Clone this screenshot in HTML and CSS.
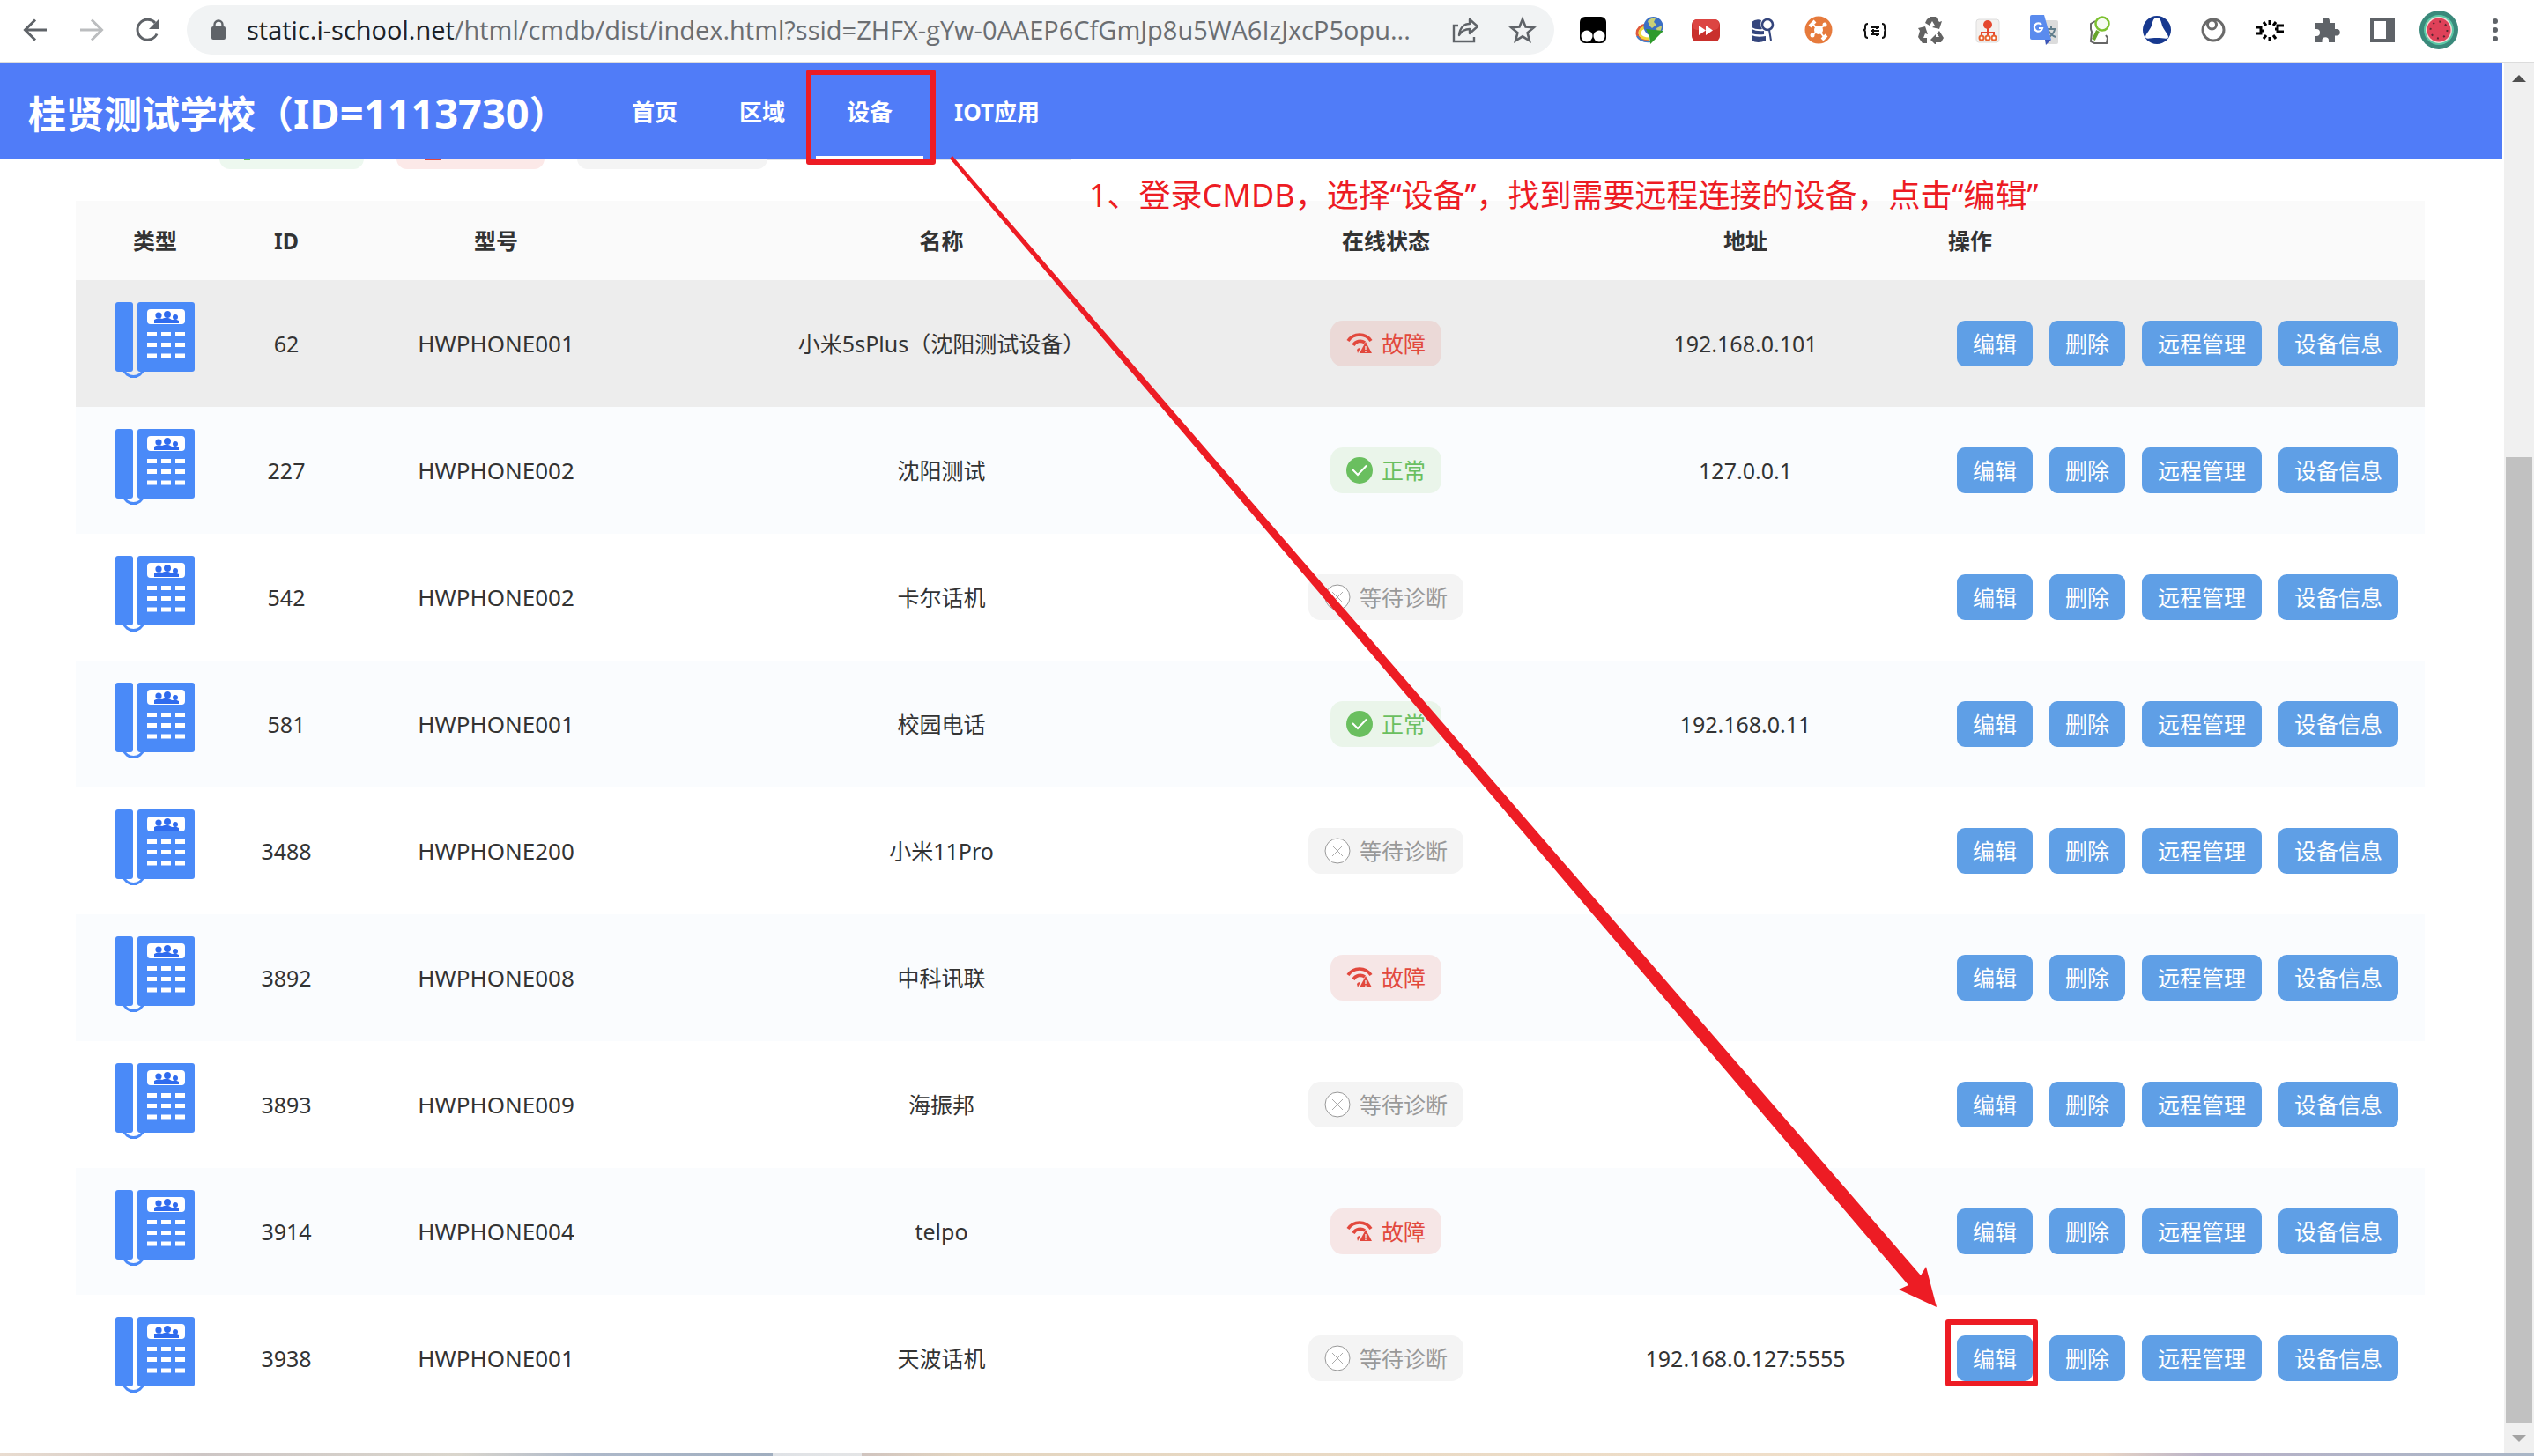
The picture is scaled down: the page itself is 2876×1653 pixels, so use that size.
FILE: index.html
```html
<!DOCTYPE html>
<html lang="zh-CN">
<head>
<meta charset="utf-8">
<title>CMDB 设备</title>
<link rel="stylesheet" href="styles.css">
</head>
<body>
<svg class="sprite" aria-hidden="true">
  <symbol id="phone" viewBox="0 0 90 94">
    <path d="M9 76a12 12 0 0 0 23 0" fill="none" stroke="#4a8af8" stroke-width="3"/>
    <rect width="20" height="79" rx="3" fill="#4a8af8"/>
    <rect x="25" width="65" height="79" rx="3" fill="#4a8af8"/>
    <rect x="36" y="8" width="43" height="17" rx="4" fill="#fff"/>
    <g fill="#2f6bee"><circle cx="49" cy="15" r="3.6"/><circle cx="59" cy="14" r="4"/><circle cx="68" cy="17" r="3"/><path d="M44 24v-4q5-3 9-1 6-3 11 1 5-1 8 1v3z"/></g>
    <path d="M36 36.500h11m5 0h11m5 0h11M36 48.500h11m5 0h11m5 0h11M36 61h11m5 0h11m5 0h11" stroke="#fff" stroke-width="5"/>
  </symbol>
  <symbol id="fault" viewBox="0 0 30 30">
    <path d="M2 12a15.500 15.500 0 0 1 26 0M8 17a9 9 0 0 1 13-3" fill="none" stroke="#e2483d" stroke-width="3.600"/>
    <path d="M22 13l7 13H15z" fill="#e2483d"/><path d="M22 18v4m0 1.500v1.500" stroke="#ecdcdc" stroke-width="1.500"/><path d="M12 22a4 4 0 0 1 4-2l-3 6z" fill="#e2483d"/>
  </symbol>
  <symbol id="ok" viewBox="0 0 30 30">
    <circle cx="15" cy="15" r="15" fill="#6abf5f"/><path d="M7 14l6 6L23 9.500" fill="none" stroke="#fff" stroke-width="2"/>
  </symbol>
  <symbol id="wait" viewBox="0 0 30 30">
    <circle cx="15" cy="15" r="14" fill="#fff" stroke="#999" stroke-width="1"/><path d="M9 9l12 12M21 9L9 21" stroke="#aaa" stroke-width="1"/>
  </symbol>
</svg>

<div class="toolbar">
  <button class="tool" aria-label="后退"><svg width="32" height="32" viewBox="0 0 32 32"><path d="M29 16H5M16 4.500L4.500 16 16 27.500" fill="none" stroke="#5f6368" stroke-width="3"/></svg></button>
  <button class="tool" aria-label="前进"><svg width="32" height="32" viewBox="0 0 32 32"><path d="M3 16h24M16 4.500L27.500 16 16 27.500" fill="none" stroke="#bbbdbf" stroke-width="3"/></svg></button>
  <button class="tool" aria-label="刷新"><svg width="32" height="32" viewBox="0 0 32 32"><path d="M26 20.500A11.500 11.500 0 1 1 24 8" fill="none" stroke="#5f6368" stroke-width="3"/><path d="M29 3v12H17z" fill="#5f6368"/></svg></button>
  <div class="address">
    <svg class="lock" width="18" height="24" viewBox="0 0 18 24"><path d="M4.500 10V6a4.500 4.500 0 0 1 9 0v4" fill="none" stroke="#5f6368" stroke-width="2.400"/><rect x="1" y="8" width="16" height="15" rx="2" fill="#5f6368"/></svg>
    <span class="url"><span class="host">static.i-school.net</span>/html/cmdb/dist/index.html?ssid=ZHFX-gYw-0AAEP6CfGmJp8u5WA6IzJxcP5opu...</span>
    <button class="tool" aria-label="分享"><svg width="32" height="32" viewBox="0 0 32 32"><path d="M7 11H2v18h23v-5" fill="none" stroke="#5f6368" stroke-width="2.400"/><path d="M8 22C9 13 14 9 20 9V4l9 8-9 8v-5c-5 0-9 2-12 7z" fill="none" stroke="#5f6368" stroke-width="2.400" stroke-linejoin="round"/></svg></button>
    <button class="tool" aria-label="收藏"><svg width="32" height="32" viewBox="0 0 32 32"><path d="M16 4l3.500 8.600 9.200.7-7.100 6 2.300 9-7.900-4.900-7.900 4.900 2.300-9-7.100-6 9.200-.7z" fill="none" stroke="#5f6368" stroke-width="2.600"/></svg></button>
  </div>
  <button class="tool" aria-label="扩展 1"><svg width="32" height="32" viewBox="0 0 32 32"><rect x="1" y="1" width="30" height="30" rx="6"/><circle cx="9" cy="23" r="6.500" fill="#fff"/><circle cx="23" cy="23" r="6.500" fill="#fff"/></svg></button>
  <button class="tool" aria-label="下载器"><svg width="32" height="32" viewBox="0 0 32 32"><path d="M12 10Q2 12 2 20q1 8 14 8" fill="none" stroke="#e05a3a" stroke-width="3"/><path d="M12 13Q5 14 5 20q1 6 11 6" fill="none" stroke="#f2d53c" stroke-width="3"/><path d="M2 23q4 7 15 6" fill="none" stroke="#3f7fd0" stroke-width="2"/><circle cx="20.500" cy="12" r="11" fill="#3b6fc4"/><path d="M14 6q5-5 9-3l-2 4 3 3-5 4-3-3zM24 14l6-3q0 7-5 9z" fill="#c9cf76"/><path d="M12 15l20 2-15 15-1-9z" fill="#2f9a2c"/></svg></button>
  <button class="tool" aria-label="视频加速"><svg width="32" height="32" viewBox="0 0 32 32"><rect y="4" width="32" height="25" rx="6" fill="#c9302c"/><rect x="1" y="4" width="30" height="12" rx="5" fill="#dc4542"/><path d="M8 11l8 5.500L8 22zM16 11l8 5.500-8 5.500z" fill="#fff"/></svg></button>
  <button class="tool" aria-label="数据查询"><svg width="32" height="32" viewBox="0 0 32 32"><path d="M4 7q5-4 11-2-2 6 1 10-7 1-12-2zM4 15q6 3 14 2v4q-8 1-14-1zM4 22q6 3 16 1v5q-9 4-16 0z" fill="#34457c"/><g fill="none" stroke="#34457c"><circle cx="22" cy="10" r="6" stroke-width="2.600"/><path d="M24 16l2 12" stroke-width="2"/></g></svg></button>
  <button class="tool" aria-label="图谱"><svg width="32" height="32" viewBox="0 0 32 32"><circle cx="16" cy="16" r="15.500" fill="#e67a3c"/><circle cx="16" cy="16" r="5" fill="#fff"/><path d="M16 16L9 9m7 7l6-5M16 16l6 8m-6-8l-6 5" stroke="#fff" stroke-width="2"/><path d="M6 12l6-6M20 27l5-5" stroke="#fff" stroke-width="4"/><circle cx="23" cy="10" r="2.500" fill="#fff"/><circle cx="9" cy="22" r="2.500" fill="#fff"/></svg></button>
  <button class="tool" aria-label="JSON"><svg width="32" height="32" viewBox="0 0 32 32"><path d="M8 9q-3 0-3 3v2q0 2-2 2 2 0 2 3v3q0 3 3 3M24 9q3 0 3 3v2q0 2 2 2-2 0-2 3v3q0 3-3 3M11 13h10M11 17h10M11 21h10" fill="none" stroke="#111" stroke-width="2"/><path d="M18 11v4M14 15v4M18 19v4" stroke="#111" stroke-width="2"/></svg></button>
  <button class="tool" aria-label="回收"><svg width="32" height="32" viewBox="0 0 32 32"><g fill="#636363"><path d="M11 4l4-3h6l4 6 3-1-3 9-8-2 3-2-3-5-3 5-5-3z"/><path d="M1 14l8-2 3 9-3-1-2 5 4 0v6H6l-5-7 2-7z"/><path d="M25 17l5 8-3 5h-6v3l-6-6 6-6v3h4l-3-4z"/></g></svg></button>
  <button class="tool" aria-label="站点结构"><svg width="32" height="32" viewBox="0 0 32 32"><rect x="3" y="4" width="26" height="26" rx="3" fill="#f3f1ef" stroke="#ddd"/><circle cx="16" cy="10" r="5" fill="#e5482f"/><path d="M16 14v9M9 23v-4h14v4" fill="none" stroke="#e5482f" stroke-width="2"/><g fill="#fff" stroke="#e8622f" stroke-width="2"><circle cx="9" cy="25" r="2.500"/><circle cx="16" cy="25" r="2.500"/><circle cx="23" cy="25" r="2.500"/></g></svg></button>
  <button class="tool" aria-label="翻译"><svg width="32" height="34" viewBox="0 0 32 34"><path d="M14 6h16q2 0 2 2v23q0 2-2 2H18z" fill="#dcdcdc"/><path d="M19 16h11M24 13v3M28 17q-2 6-8 9M21 18q3 5 8 7" fill="none" stroke="#607d8b" stroke-width="2"/><path d="M2 0h14l8 28H2q-2 0-2-2V2q0-2 2-2z" fill="#5a8bee"/><path d="M17 28h7l-6 6z" fill="#3b55b8"/><path d="M13 11a4.600 4.600 0 1 0 1 4h-4" fill="none" stroke="#fff" stroke-width="2.200"/></svg></button>
  <button class="tool" aria-label="查找"><svg width="32" height="32" viewBox="0 0 32 32"><path d="M10 6l-5 3v6l1 3-1 11 4 2h14l1-6-2-3" fill="none" stroke="#666" stroke-width="2"/><path d="M13 17L8 27" stroke="#67a52c" stroke-width="4"/><circle cx="18" cy="9" r="7.500" fill="#f6fbf2" stroke="#7cc12f" stroke-width="2.500"/></svg></button>
  <button class="tool" aria-label="扩展 2"><svg width="32" height="34" viewBox="0 0 32 34"><circle cx="16" cy="17" r="16" fill="#17398f"/><path d="M16 3c4 0 5 5 6 9s7 10 7 13-6 1-13 1-13 2-13-1 6-9 7-13 2-9 6-9z" fill="#fff"/></svg></button>
  <button class="tool" aria-label="扩展 3"><svg width="32" height="32" viewBox="0 0 32 32"><g fill="none" stroke="#6a6a6a" stroke-width="3"><circle cx="16" cy="16" r="12"/><circle cx="14.500" cy="10" r="5"/></g></svg></button>
  <button class="tool" aria-label="扩展 4"><svg width="32" height="32" viewBox="0 0 32 32"><path d="M0 13h6v7H0M6 17h3M32 11h-7v7h7M22 15h3M16 5v5M16 24v5M9 7l3 4M23 7l-3 4M9 26l3-4M23 26l-3-4" fill="none" stroke="#000" stroke-width="3"/></svg></button>
  <button class="tool" aria-label="扩展程序"><svg width="32" height="32" viewBox="0 0 32 32"><path d="M4 8h8V6a4 4 0 0 1 8 0v2h6v7h2a3.700 3.700 0 0 1 0 7.500h-2V30h-7v-2a3.700 3.700 0 0 0-7.500 0v2H4v-7h1a4 4 0 0 0 0-8H4z" fill="#5f6368"/></svg></button>
  <button class="tool" aria-label="侧边栏"><svg width="32" height="32" viewBox="0 0 32 32"><path d="M2 2h28v28H2zM6 6v20h14V6z" fill="#5f6368" fill-rule="evenodd"/></svg></button>
  <button class="tool" aria-label="用户"><svg width="44" height="44" viewBox="0 0 44 44"><circle cx="22" cy="22" r="22" fill="#3a897b"/><circle cx="22" cy="22" r="17" fill="#5cc9a7"/><circle cx="22" cy="22" r="15" fill="#f3dcd8"/><circle cx="22" cy="22" r="13.500" fill="#df4159"/><circle cx="22" cy="22" r="9.500" fill="none" stroke="#5a2630" stroke-width="2" stroke-dasharray="2 5.460"/></svg></button>
  <button class="tool" aria-label="菜单"><svg width="8" height="28" viewBox="0 0 8 28"><g fill="#5f6368"><circle cx="4" cy="4" r="3"/><circle cx="4" cy="14" r="3"/><circle cx="4" cy="24" r="3"/></g></svg></button>
</div>

<div class="viewport">
  <div class="page">
    <header class="header">
      <h1 class="school">桂贤测试学校（<span class="school-id">ID=1113730</span>）</h1>
      <nav class="nav">
        <a href="#home">首页</a>
        <a href="#area">区域</a>
        <a href="#device" class="active">设备</a>
        <a href="#iot">IOT应用</a>
      </nav>
    </header>
    <div class="filters">
      <span class="filter filter-ok"></span>
      <span class="filter filter-fault"></span>
      <span class="filter filter-wait"></span>
    </div>
    <main class="content">
      <table class="devices">
        <colgroup><col class="c-type"><col class="c-id"><col class="c-model"><col><col class="c-status"><col class="c-address"><col class="c-ops"></colgroup>
        <thead>
          <tr><th>类型</th><th>ID</th><th>型号</th><th>名称</th><th>在线状态</th><th>地址</th><th class="ops-head">操作</th></tr>
        </thead>
        <tbody>
          <tr class="hovered"><td><svg class="phone"><use href="#phone"/></svg></td><td>62</td><td class="model">HWPHONE001</td><td>小米5sPlus（沈阳测试设备）</td><td><span class="status fault"><svg><use href="#fault"/></svg>故障</span></td><td>192.168.0.101</td><td><div class="ops"><button>编辑</button><button>删除</button><button>远程管理</button><button>设备信息</button></div></td></tr>
          <tr><td><svg class="phone"><use href="#phone"/></svg></td><td>227</td><td class="model">HWPHONE002</td><td>沈阳测试</td><td><span class="status ok"><svg><use href="#ok"/></svg>正常</span></td><td>127.0.0.1</td><td><div class="ops"><button>编辑</button><button>删除</button><button>远程管理</button><button>设备信息</button></div></td></tr>
          <tr><td><svg class="phone"><use href="#phone"/></svg></td><td>542</td><td class="model">HWPHONE002</td><td>卡尔话机</td><td><span class="status wait"><svg><use href="#wait"/></svg>等待诊断</span></td><td></td><td><div class="ops"><button>编辑</button><button>删除</button><button>远程管理</button><button>设备信息</button></div></td></tr>
          <tr><td><svg class="phone"><use href="#phone"/></svg></td><td>581</td><td class="model">HWPHONE001</td><td>校园电话</td><td><span class="status ok"><svg><use href="#ok"/></svg>正常</span></td><td>192.168.0.11</td><td><div class="ops"><button>编辑</button><button>删除</button><button>远程管理</button><button>设备信息</button></div></td></tr>
          <tr><td><svg class="phone"><use href="#phone"/></svg></td><td>3488</td><td class="model">HWPHONE200</td><td>小米11Pro</td><td><span class="status wait"><svg><use href="#wait"/></svg>等待诊断</span></td><td></td><td><div class="ops"><button>编辑</button><button>删除</button><button>远程管理</button><button>设备信息</button></div></td></tr>
          <tr><td><svg class="phone"><use href="#phone"/></svg></td><td>3892</td><td class="model">HWPHONE008</td><td>中科讯联</td><td><span class="status fault"><svg><use href="#fault"/></svg>故障</span></td><td></td><td><div class="ops"><button>编辑</button><button>删除</button><button>远程管理</button><button>设备信息</button></div></td></tr>
          <tr><td><svg class="phone"><use href="#phone"/></svg></td><td>3893</td><td class="model">HWPHONE009</td><td>海振邦</td><td><span class="status wait"><svg><use href="#wait"/></svg>等待诊断</span></td><td></td><td><div class="ops"><button>编辑</button><button>删除</button><button>远程管理</button><button>设备信息</button></div></td></tr>
          <tr><td><svg class="phone"><use href="#phone"/></svg></td><td>3914</td><td class="model">HWPHONE004</td><td>telpo</td><td><span class="status fault"><svg><use href="#fault"/></svg>故障</span></td><td></td><td><div class="ops"><button>编辑</button><button>删除</button><button>远程管理</button><button>设备信息</button></div></td></tr>
          <tr><td><svg class="phone"><use href="#phone"/></svg></td><td>3938</td><td class="model">HWPHONE001</td><td>天波话机</td><td><span class="status wait"><svg><use href="#wait"/></svg>等待诊断</span></td><td>192.168.0.127:5555</td><td><div class="ops"><button class="marked">编辑</button><button>删除</button><button>远程管理</button><button>设备信息</button></div></td></tr>
        </tbody>
      </table>
    </main>
  </div>
  <div class="scrollbar" aria-hidden="true">
    <svg class="scroll-arrow" width="16" height="8" viewBox="0 0 16 8"><path d="M8 0l8 8H0z" fill="#505050"/></svg>
    <span></span>
    <span class="thumb"></span>
    <svg class="scroll-arrow" width="16" height="8" viewBox="0 0 16 8"><path d="M8 8l8-8H0z" fill="#a3a3a3"/></svg>
  </div>
</div>
<div class="desktop-edge"></div>

<p class="note">1、登录CMDB，选择“设备”，找到需要远程连接的设备，点击“编辑”</p>
<svg class="arrow" width="1120" height="1308" viewBox="0 0 1120 1308" aria-hidden="true"><path d="M0 3L3 0 1102 1271 1108 1261 1120 1307 1077 1287 1088 1282z" fill="#ed1c24"/></svg>
</body>
</html>
```
FILE: styles.css
```css
* { box-sizing: border-box; }

body {
  margin: 0;
  position: relative;
  min-height: 100vh;
  display: flex;
  flex-direction: column;
  background: #fff;
  color: #333;
  font: 25px/36px "Noto Sans", "Noto Sans CJK SC", sans-serif;
}

button {
  border: 0;
  margin: 0;
  padding: 0;
  background: none;
  font: inherit;
  color: inherit;
}

.sprite { position: absolute; width: 0; height: 0; }

/* Browser toolbar */
.toolbar {
  display: flex;
  align-items: center;
  height: 72px;
  padding: 0 12px 2px 8px;
  border-bottom: 2px solid #dcdcdc;
}
.tool {
  flex: none;
  width: 64px;
  height: 56px;
  display: flex;
  align-items: center;
  justify-content: center;
}
.address {
  flex: 1;
  min-width: 0;
  height: 56px;
  margin: 0 12px;
  padding: 0 4px 0 27px;
  display: flex;
  align-items: center;
  border-radius: 28px;
  background: #f1f3f4;
}
.lock { flex: none; margin-right: 23px; }
.url {
  flex: 1;
  min-width: 0;
  overflow: hidden;
  white-space: nowrap;
  font: 29px/40px "Open Sans", sans-serif;
  color: #6b6e72;
}
.host { color: #202124; }

/* Page and scrollbar */
.viewport { flex: 1; display: flex; gap: 2px; }
.page { flex: 1; min-width: 0; }
.scrollbar {
  width: 34px;
  padding: 0 2px;
  display: grid;
  grid-template-rows: 34px 413fr 1097fr 34px;
  background: #f0f0f0;
}
.scroll-arrow { place-self: center; }
.thumb { background: #c1c1c1; }
.desktop-edge {
  height: 3px;
  background: linear-gradient(90deg, #e9dcd0 0, #cdc6c5 8%, #dad6cd 18%, #aeb9ca 23%, #a0aebf 30.5%, #dfe2e6 30.5%, #e4e5e6 34%, #d0c4bf 34%, #e3d5c0 38%, #f0dfca 73%, #e8d5c5 83%, #b8b2c8 87%, #a9b6c6 100%);
}

.header {
  display: flex;
  height: 108px;
  padding-left: 32px;
  background: #507cf8;
  color: #fff;
  font-weight: 700;
}
.school {
  margin: 0;
  width: 650px;
  white-space: nowrap;
  font-size: 43px;
  line-height: 112px;
}
.school-id { font-size: 47px; }
.nav { display: flex; height: 110px; border-bottom: 2px solid #e0e2e6; }
.nav a {
  position: relative;
  height: 108px;
  padding: 0 35px;
  color: #fff;
  text-decoration: none;
  font-size: 26px;
  line-height: 110px;
}
.nav .active { border-bottom: 3px solid #fff; }
.nav .active::after,
.marked::after {
  content: "";
  position: absolute;
  border: 6px solid #ed1c24;
  border-radius: 3px;
}
.nav .active::after { inset: 7px -14px -10px -11px; }

.filters { display: flex; gap: 37px; padding-left: 249px; }
.filter { height: 12px; border-radius: 0 0 14px 14px; }
.filter::before { content: ""; display: block; height: 2px; }
.filter-ok { width: 164px; background: #edf8ef; }
.filter-ok::before { width: 7px; margin-left: 28px; background: #6abf5f; }
.filter-fault { width: 168px; background: #fce9e8; }
.filter-fault::before { width: 18px; margin-left: 32px; background: #e2483d; }
.filter-wait { width: 216px; background: #f4f4f4; }

/* Device table */
.content { padding: 36px 88px 36px 86px; }
.devices { width: 100%; table-layout: fixed; border-collapse: collapse; text-align: center; }
.c-type { width: 180px; }
.c-id { width: 118px; }
.c-model { width: 358px; }
.c-status { width: 356px; }
.c-address { width: 460px; }
.c-ops { width: 541px; }
.devices th { height: 90px; padding: 0; background: #fafafa; font-weight: 700; }
.devices .ops-head { text-align: left; }
.devices td { height: 144px; padding: 0; }
.devices tbody tr:nth-child(even) { background: #fafcfe; }
.devices .hovered { background: #ededed; }
.devices .model { font-size: 26px; }
.phone { display: block; width: 90px; height: 94px; margin: 0 auto; }

.status {
  display: inline-flex;
  align-items: center;
  gap: 10px;
  height: 52px;
  padding: 0 18px;
  border-radius: 14px;
  vertical-align: middle;
}
.status svg { width: 30px; height: 30px; }
.status.fault { background: rgba(226, 72, 61, .12); color: #e2483d; }
.status.ok { background: #eaf5ea; color: #6abf5f; }
.status.wait { background: #f4f4f4; color: #999; }

.ops { display: flex; gap: 19px; padding-left: 10px; }
.ops button {
  position: relative;
  height: 52px;
  padding: 0 18px;
  border-radius: 9px;
  background: #5f9fe6;
  color: #fff;
}
.marked::after { inset: -18px -6px -6px -13px; }

/* Tutorial annotation laid over the window */
.note {
  position: absolute;
  left: 1236px;
  top: 196px;
  margin: 0;
  white-space: nowrap;
  font-size: 36px;
  line-height: 52px;
  color: #ed1c24;
}
.arrow { position: absolute; left: 1078px; top: 177px; }
```
